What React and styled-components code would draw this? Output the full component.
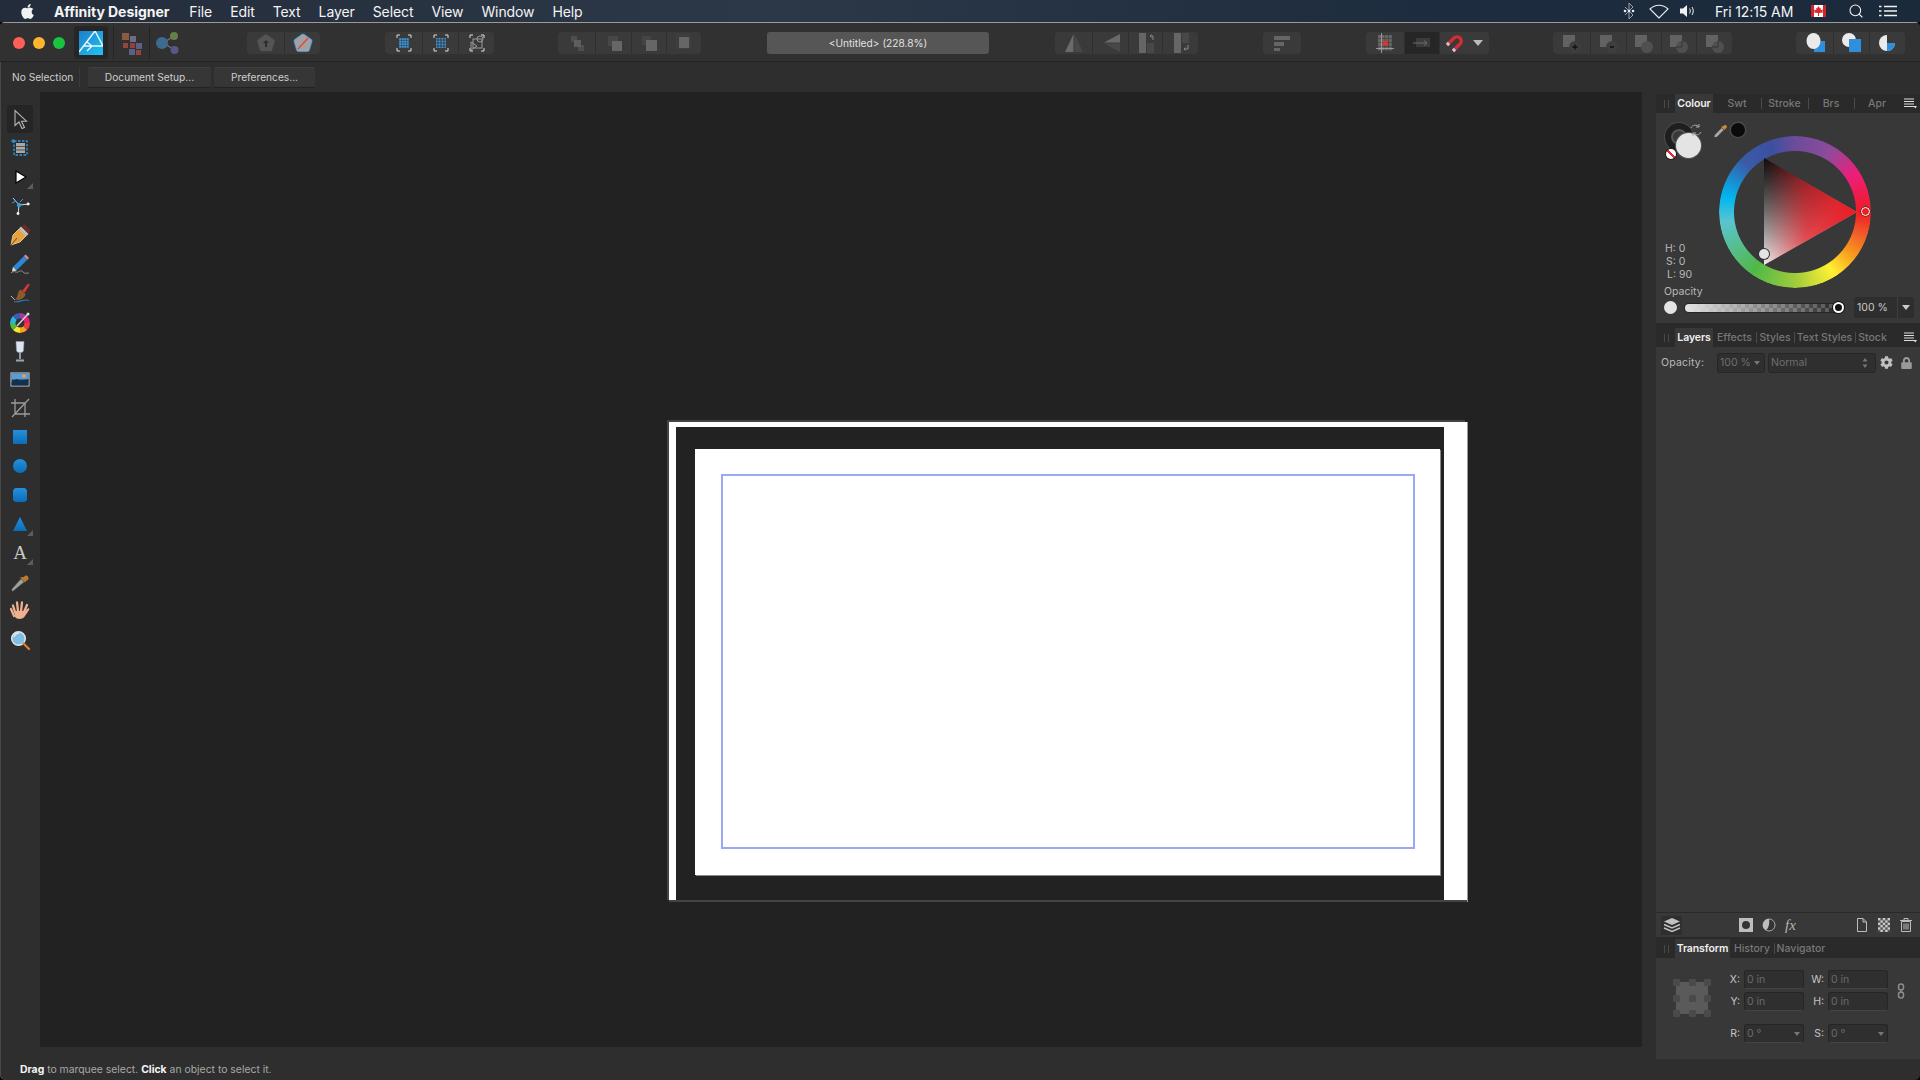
import styled, { createGlobalStyle } from "styled-components";
import { FaApple, FaCog, FaLock } from "react-icons/fa";
import { Search } from "lucide-react";

const menus = ["File", "Edit", "Text", "Layer", "Select", "View", "Window", "Help"];

// used inside the icon tables below, so they have to exist first
const Dropdown = styled.div`
	display: flex;
	align-items: center;
	gap: 7px;
	margin-left: -5px;
`;

const Caret = styled.span`
	width: 0;
	height: 0;
	flex: none;
	border-left: ${(p) => p.$size}px solid transparent;
	border-right: ${(p) => p.$size}px solid transparent;
	border-top: ${(p) => p.$size * 1.3}px solid ${(p) => p.$color};
`;

const ToolLetter = styled.span`
	font-family: "Liberation Serif", serif;
	font-size: 19px;
	color: #c9c9c9;
`;

const Brackets = () => (
	<path d="M5 7V4h3M16 4h3v3M19 17v3h-3M8 20H5v-3" fill="none" stroke="#ddd" strokeWidth="1" />
);

const Dots = ({ n, size, step, from }) => (
	<g fill="#3b9ae1">
		{Array.from({ length: n * n }).map((_, i) => (
			<rect key={i} x={from + (i % n) * step} y={from + Math.floor(i / n) * step} width={size} height={size} />
		))}
	</g>
);

const Svg = ({ children, size = 24 }) => (
	<svg width={size} height={size} viewBox="0 0 24 24">
		{children}
	</svg>
);

const petals = "12,5 19,10 16.500,18.500 7.500,18.500 5,10";

const toolbarGroups = {
	flowers: [
		{
			w: 37,
			icon: (
				<Svg>
					<polygon points={petals} fill="#555" stroke="#3e3e3e" strokeWidth="5.500" strokeLinejoin="round" />
					<polygon points={petals} fill="#555" stroke="#555" strokeWidth="3" strokeLinejoin="round" />
					<path d="M12 9l3 3h-2v4h-2v-4H9z" fill="#2c2c2c" />
				</Svg>
			),
		},
		{
			w: 36,
			icon: (
				<Svg>
					<polygon points={petals} fill="#a2a2a2" stroke="#2f8fdc" strokeWidth="5" strokeLinejoin="round" />
					<polygon points={petals} fill="#a2a2a2" stroke="#a2a2a2" strokeWidth="3.400" strokeLinejoin="round" />
					<path d="M7 18L17 7" stroke="#e8403a" strokeWidth="1.2" />
				</Svg>
			),
		},
	],
	select: [
		{
			w: 37,
			icon: (
				<Svg>
					<Brackets />
					<Dots n={4} size={2} step={2.5} from={7.2} />
				</Svg>
			),
		},
		{
			w: 36,
			icon: (
				<Svg>
					<Brackets />
					<Dots n={7} size={1} step={1.5} from={7} />
				</Svg>
			),
		},
		{
			w: 36,
			icon: (
				<Svg>
					<Brackets />
					<g fill="none" stroke="#999">
						<circle cx="15" cy="8" r="3" />
						<rect x="8" y="8" width="9" height="9" />
						<path d="M6 11l6 4-6 4z" />
					</g>
				</Svg>
			),
		},
	],
	arrange: [
		{
			w: 37,
			icon: (
				<Svg>
					<g fill="#4e4e4e">
						<rect x="6" y="5" width="6" height="6" />
						<rect x="13" y="14" width="6" height="6" />
					</g>
					<rect x="9" y="9" width="7" height="7" fill="#5e5e5e" />
				</Svg>
			),
		},
		{
			w: 36,
			icon: (
				<Svg>
					<rect x="6" y="5" width="10" height="10" fill="#474747" />
					<rect x="10" y="10" width="10" height="10" fill="#666" />
				</Svg>
			),
		},
		{
			w: 35,
			icon: (
				<Svg>
					<rect x="5" y="5" width="9" height="9" fill="#444" />
					<rect x="9" y="9" width="11" height="11" fill="#666" />
				</Svg>
			),
		},
		{
			w: 35,
			icon: (
				<Svg>
					<rect x="5" y="4" width="13" height="13" fill="none" stroke="#444" />
					<rect x="7" y="6" width="10" height="11" fill="#666" />
				</Svg>
			),
		},
	],
	flip: [
		{
			w: 37,
			icon: (
				<Svg>
					<path d="M11.5 3v18H3z" fill="#6a6a6a" />
					<path d="M12.5 3v18H21z" fill="#484848" />
				</Svg>
			),
		},
		{
			w: 36,
			icon: (
				<Svg>
					<path d="M21 3v8.5H5z" fill="#6a6a6a" />
					<path d="M21 21v-8.5H5z" fill="#484848" />
				</Svg>
			),
		},
		{
			w: 34,
			icon: (
				<Svg>
					<rect x="5" y="2" width="7" height="20" fill="#666" />
					<rect x="13" y="12" width="7" height="10" fill="#484848" />
					<path d="M19 9V5h-3m1.5-1.5L16 5l1.5 1.5" fill="none" stroke="#888" />
				</Svg>
			),
		},
		{
			w: 36,
			icon: (
				<Svg>
					<rect x="5" y="2" width="7" height="20" fill="#666" />
					<rect x="13" y="2" width="7" height="10" fill="#484848" />
					<path d="M19 14v4h-4m1.5-1.5L15 18l1.5 1.5" fill="none" stroke="#888" />
				</Svg>
			),
		},
	],
	align: [
		{
			w: 38,
			icon: (
				<Svg>
					<g fill="#666">
						<rect x="4" y="5" width="16" height="4" />
						<rect x="4" y="11" width="10" height="4" />
						<rect x="4" y="17" width="6" height="3" />
					</g>
				</Svg>
			),
		},
	],
	snapping: [
		{
			w: 38,
			icon: (
				<Svg>
					<g fill="#666">
						{Array.from({ length: 16 }).map((_, i) => (
							<rect key={i} x={5 + (i % 4) * 3.6} y={4 + Math.floor(i / 4) * 4} width="3" height="3.4" />
						))}
					</g>
					<rect x="10" y="10" width="4.5" height="4.5" fill="#ee2a2a" />
					<path d="M3 17.5h18M8.5 2v20" stroke="#aaa" strokeWidth="0.8" />
				</Svg>
			),
		},
		{
			w: 35,
			on: true,
			icon: (
				<Svg>
					<rect x="6" y="7" width="14" height="9" fill="#3c3c3c" />
					<path d="M3 12h14m-3-2.5l3 2.5-3 2.5" fill="none" stroke="#6c6c6c" />
				</Svg>
			),
		},
		{
			w: 50,
			icon: (
				<Dropdown>
					<Svg>
						<path d="M5 14L12 7A4.240 4.240 0 0 1 18 13L11 20" fill="none" stroke="#d92b34" strokeWidth="3.200" />
						<path d="M5 14l2-2M11 20l2-2" fill="none" stroke="#c9c9c9" strokeWidth="3.200" />
					</Svg>
					<Caret $color="#bbb" $size={5} />
				</Dropdown>
			),
		},
	],
	boolean: [
		{ w: 37, mark: "+" },
		{ w: 36, mark: "-" },
		{ w: 35 },
		{ w: 35, split: true },
		{ w: 36, split: true },
	].map((b) => ({
		w: b.w,
		icon: (
			<Svg>
				<rect x="3" y="4" width="12" height="12" fill="#626262" />
				<circle cx="15" cy="16" r="6" fill={b.mark ? "#3e3e3e" : "#505050"} />
				{b.mark === "+" && <path d="M12.500 16h5M15 13.500v5" stroke="#111" strokeWidth="1.3" />}
				{b.mark === "-" && <path d="M13 16h4" stroke="#111" strokeWidth="1.3" />}
				{b.split && <path d="M15 10v6H9" fill="none" stroke="#333" />}
			</Svg>
		),
	})),
	order: [
		{
			w: 37,
			icon: (
				<Svg>
					<rect x="11" y="10" width="11" height="11" fill="#2f8fdc" />
					<ellipse cx="10.500" cy="10" rx="7" ry="8" fill="#eaeaea" />
				</Svg>
			),
		},
		{
			w: 36,
			icon: (
				<Svg>
					<circle cx="9" cy="9" r="7" fill="#eaeaea" />
					<rect x="9" y="8" width="12" height="13" fill="#2f8fdc" />
				</Svg>
			),
		},
		{
			w: 36,
			icon: (
				<Svg>
					<circle cx="11" cy="12" r="8" fill="#eaeaea" />
					<rect x="11" y="4" width="9" height="8" fill="#3a3a3a" />
					<path d="M11 12h8c0 4-3 8-8 8z" fill="#2f8fdc" />
				</Svg>
			),
		},
	],
};

const wedges = ["#ef3b3b", "#f6a11e", "#f2e92f", "#4dba4a", "#27b5e8", "#3f5db0", "#a23d9c", "#e81e78"];

const polar = (deg, r) => {
	const a = (deg * Math.PI) / 180;
	return `${12 + r * Math.cos(a)} ${13 + r * Math.sin(a)}`;
};

const BlueFill = ({ id }) => (
	<defs>
		<linearGradient id={id} x1="0" y1="0" x2="0" y2="1">
			<stop offset="0" stopColor="#2590de" />
			<stop offset="1" stopColor="#0c6cb6" />
		</linearGradient>
	</defs>
);

const tools = [
	{
		active: true,
		icon: (
			<Svg>
				<path d="M7 3.500v15l4-3.500 3 6.500 2.500-1-3-6.300h5z" fill="#262626" stroke="#b5b5b5" strokeWidth="1.100" />
			</Svg>
		),
	},
	{
		icon: (
			<Svg>
				<rect x="6" y="5" width="13" height="14" fill="none" stroke="#2f9be6" strokeWidth="1.300" strokeDasharray="2.500 1.500" />
				<rect x="8" y="7" width="9" height="10" fill="#a8a8a8" />
				<path d="M8 10.500h9M8 14h9" stroke="#555" />
				<path d="M3 5h4M5 3v4" stroke="#2f9be6" />
			</Svg>
		),
	},
	{
		flyout: true,
		icon: (
			<Svg>
				<path d="M8 6l10 6-10 6z" fill="#fff" stroke="#000" strokeWidth="1.200" />
			</Svg>
		),
	},
	{
		icon: (
			<Svg>
				<path d="M5 4l6 7M11 11l11-1M11 11l-1 10" fill="none" stroke="#d2d2d2" strokeWidth="1" />
				<circle cx="11" cy="11" r="2.200" fill="#2f9be6" />
				<circle cx="20" cy="10" r="1.400" fill="#f2f2f2" />
				<circle cx="10" cy="19.500" r="1.400" fill="#f2f2f2" />
				<path d="M4 9l4-2M15 5l-3 3" stroke="#2f9be6" />
			</Svg>
		),
	},
	{
		icon: (
			<Svg>
				<path d="M3 22l2-10 6-6 7 7-6 6z" fill="#e5a23e" stroke="#f5d79a" strokeWidth="0.800" />
				<path d="M3 22l6-7" stroke="#7a4a14" />
				<path d="M11 5.500l2-2 7.500 7.500-2 2z" fill="#c4c4c4" />
				<path d="M14 3.500L16.500 1 23 7.500 20.500 10z" fill="#6b2a26" />
			</Svg>
		),
	},
	{
		icon: (
			<Svg>
				<path d="M5 15L16 4l3.500 3.500-11 11-4.500 1z" fill="#2c86d8" />
				<path d="M16 4l1.500-1.500 3.500 3.500L19.500 7.500z" fill="#e98a8a" />
				<path d="M5 15l3.500 3.500-4.500 1z" fill="#ecd4a8" />
				<path d="M3 21c3-3 5 0 7-1s3-2 5 0 4 1 6 1" fill="none" stroke="#9a9a9a" strokeWidth="0.900" />
			</Svg>
		),
	},
	{
		icon: (
			<Svg>
				<path d="M14 10L20 2.500l1.800 1.200-5 8z" fill="#d9343a" />
				<path d="M12.500 8.500l5 4.500c-1 5-6.500 7-10.500 5.500 3-1.500 2-7.500 5.500-10z" fill="#8d5a2b" />
				<path d="M6 20.500c5 1.500 10-3 15-1" fill="none" stroke="#2a7cc8" strokeWidth="1.100" />
				<path d="M3 15l4 4" stroke="#bbb" />
			</Svg>
		),
	},
	{
		icon: (
			<Svg>
				{wedges.map((c, i) => (
					<path
						key={c}
						d={`M12 13L${polar(i * 45, 10)}A10 10 0 0 1 ${polar((i + 1) * 45, 10)}Z`}
						fill={c}
					/>
				))}
				<circle cx="12" cy="13" r="4.500" fill="#333" />
				<path d="M9 16l11-12" stroke="#ddd" strokeWidth="1.300" />
				<circle cx="20" cy="4" r="1.500" fill="#ddd" />
			</Svg>
		),
	},
	{
		icon: (
			<Svg>
				<path d="M8 2.500h8l-.5 9c-.5 3-6.500 3-7 0z" fill="#dbe4ef" stroke="#8899b4" strokeWidth="0.500" />
				<path d="M12 14v6M8 21.500h8" stroke="#9aa5b4" strokeWidth="1.800" />
			</Svg>
		),
	},
	{
		icon: (
			<Svg>
				<rect x="3" y="6" width="18" height="13" fill="#1f3550" stroke="#cfcfcf" />
				<rect x="3.500" y="6.500" width="17" height="6" fill="#5b9bd6" />
				<circle cx="16" cy="9" r="1.800" fill="#f3a53c" />
				<path d="M3.500 15l5-3 5 2 7-2v6.500h-17z" fill="#14304f" />
			</Svg>
		),
	},
	{
		icon: (
			<Svg>
				<path d="M7 3v15h15M3 7h14v14M4 21L21 3" fill="none" stroke="#9b9b9b" strokeWidth="1.300" />
			</Svg>
		),
	},
	{
		icon: (
			<Svg>
				<BlueFill id="toolRect" />
				<rect x="5" y="5" width="14" height="14" fill="url(#toolRect)" />
			</Svg>
		),
	},
	{
		icon: (
			<Svg>
				<BlueFill id="toolCircle" />
				<circle cx="12" cy="12" r="7" fill="url(#toolCircle)" />
			</Svg>
		),
	},
	{
		icon: (
			<Svg>
				<BlueFill id="toolRounded" />
				<rect x="5" y="5" width="14" height="14" rx="3.500" fill="url(#toolRounded)" />
			</Svg>
		),
	},
	{
		flyout: true,
		icon: (
			<Svg>
				<BlueFill id="toolTriangle" />
				<path d="M12 5l7 14H5z" fill="url(#toolTriangle)" />
			</Svg>
		),
	},
	{ flyout: true, icon: <ToolLetter>A</ToolLetter> },
	{
		icon: (
			<Svg>
				<path d="M5 21l-1 0 0-2 9-10 3 3z" fill="#a0a0a0" stroke="#6a6a6a" strokeWidth="0.500" />
				<path d="M12 7.500l5 5 1.500-2 1.500-.5c1.500-2 0-4.500-2-4.500-1.500 0-1 1-2.500 1.500z" fill="#b87a2e" />
			</Svg>
		),
	},
	{
		icon: (
			<Svg>
				<path
					d="M7 13L5 6.500M10 12L9 3.500M13 12l1-8.500M16 13l3-7"
					fill="none"
					stroke="#eeb08e"
					strokeWidth="2.300"
					strokeLinecap="round"
				/>
				<path d="M6 12h10.500l4-3c1 .5 1 1.500.5 2l-4 6c-1.500 3.500-8 4-10 1z" fill="#eeb08e" />
				<path d="M3 10l3 7" stroke="#eeb08e" strokeWidth="2.200" strokeLinecap="round" />
			</Svg>
		),
	},
	{
		icon: (
			<Svg>
				<circle cx="10.500" cy="10.500" r="6.800" fill="#7fbfe6" stroke="#e3e3e3" strokeWidth="1.500" />
				<path d="M6 9c1-3 3-4 5-4" stroke="#d7eefa" strokeWidth="1.300" fill="none" />
				<path d="M15.500 15.500L21 21" stroke="#d9822b" strokeWidth="2.300" strokeLinecap="round" />
			</Svg>
		),
	},
];

const transformHandles = Array.from({ length: 9 });

function PanelTabs({ tabs, menu }) {
	return (
		<TabBar>
			<Grip />
			{tabs.map((t, i) => (
				<Tab key={t.label} $w={t.w} $active={i === 0} $sep={i > 1}>
					{t.label}
				</Tab>
			))}
			{menu && <PanelMenu />}
		</TabBar>
	);
}

function ToolbarGroup({ name, ml }) {
	return (
		<Group $ml={ml}>
			{toolbarGroups[name].map((b, i) => (
				<GroupButton key={i} $w={b.w} $on={b.on}>
					{b.icon}
				</GroupButton>
			))}
		</Group>
	);
}

function PanelMenu() {
	return (
		<MenuLines>
			<svg width="13" height="11" viewBox="0 0 13 11">
				<path d="M0 1h10M0 3.500h10M0 6h10M0 8.500h10" stroke="#ddd" />
				<path d="M9.500 8h3.500l-1.750 2.500z" fill="#ddd" />
			</svg>
		</MenuLines>
	);
}

function ColourPanel() {
	return (
		<ColourBody>
			<ColourGrid>
				<ColourTools>
					<Swatches>
						<BackSwatch />
						<FrontSwatch />
						<NoneSwatch />
						<SwapArrows width="14" height="14" viewBox="0 0 14 14">
							<path
								d="M2 5c1-3 6-4 8-1M12 9c-1 3-6 4-8 1M10 1v3H7M4 13v-3h3"
								fill="none"
								stroke="#aaa"
								strokeWidth="1"
							/>
						</SwapArrows>
					</Swatches>
					<Dropper width="16" height="16" viewBox="0 0 24 24">
						<path d="M3 23l-1-1 1-3 10-10 3 3-10 10z" fill="#a8a8a8" />
						<path d="M12 7l5 5 1.500-2 1.500-.5c2-2.500 0-6-2.500-5-1.500.5-1 1.500-2.500 2z" fill="#c98a35" />
					</Dropper>
					<BlackDot />
				</ColourTools>
				<Hsl>
					<HslLine $indent={0}>H: 0</HslLine>
					<HslLine $indent={1}>S: 0</HslLine>
					<HslLine $indent={2}>L: 90</HslLine>
				</Hsl>
				<Wheel>
					<Ring />
					<WheelTriangle width="152" height="152" viewBox="0 0 152 152">
						<defs>
							<linearGradient id="triLight" x1="0" y1="0" x2="0" y2="1">
								<stop offset="0" stopColor="#111" />
								<stop offset="1" stopColor="#fff" />
							</linearGradient>
							<linearGradient id="triHue" x1="0" y1="0" x2="1" y2="0">
								<stop offset="0" stopColor="#ee1c25" stopOpacity="0" />
								<stop offset="0.45" stopColor="#ee1c25" stopOpacity="0.72" />
								<stop offset="1" stopColor="#ee1c25" />
							</linearGradient>
							<linearGradient id="triShade" x1="0.1" y1="0" x2="0.9" y2="0.8">
								<stop offset="0" stopColor="#000" stopOpacity="0.3" />
								<stop offset="0.7" stopColor="#000" stopOpacity="0" />
							</linearGradient>
						</defs>
						<polygon points="45,22 138,76 45,129" fill="url(#triLight)" />
						<polygon points="45,22 138,76 45,129" fill="url(#triHue)" />
						<polygon points="45,22 138,76 45,129" fill="url(#triShade)" />
					</WheelTriangle>
					<HueHandle />
					<ToneHandle />
				</Wheel>
			</ColourGrid>
			<OpacityLabel>Opacity</OpacityLabel>
			<OpacityRow>
				<OpacityDot />
				<OpacityTrack>
					<OpacityKnob />
				</OpacityTrack>
				<PercentField>
					<span>100 %</span>
					<PercentCaret>
						<Caret $color="#ccc" $size={4} />
					</PercentCaret>
				</PercentField>
			</OpacityRow>
		</ColourBody>
	);
}

function LayersPanel() {
	return (
		<>
			<PanelTabs
				tabs={[
					{ label: "Layers", w: 38 },
					{ label: "Effects", w: 43 },
					{ label: "Styles", w: 38 },
					{ label: "Text Styles", w: 61 },
					{ label: "Stock", w: 35 },
				]}
				menu
			/>
			<LayersOptions>
				<OptionLabel>Opacity:</OptionLabel>
				<DimField $w={48} $h={20}>
					<span>100 %</span>
					<Caret $color="#777" $size={3.5} />
				</DimField>
				<DimField $w={108} $h={20} $ml={3}>
					<span>Normal</span>
					<StepCaret>
						<svg width="6" height="12" viewBox="0 0 6 12">
							<path d="M3 1l2.500 3.500h-5zM3 11L.5 7.500h5z" fill="#777" />
						</svg>
					</StepCaret>
				</DimField>
				<GearIcon />
				<LockIcon />
			</LayersOptions>
			<LayersList />
			<LayerActions>
				<LayerStackButton>
					<svg width="18" height="16" viewBox="0 0 18 16">
						<path d="M9 1l8 3.500L9 8 1 4.500z" fill="#c2c2c2" />
						<path d="M1 7.500L9 11l8-3.500M1 11l8 3.500 8-3.500" fill="none" stroke="#c2c2c2" strokeWidth="1.400" />
					</svg>
				</LayerStackButton>
				<ActionIcons>
					<svg width="14" height="14" viewBox="0 0 14 14">
						<rect width="14" height="14" fill="#bdbdbd" />
						<circle cx="7" cy="7" r="4" fill="#333" />
					</svg>
					<svg width="14" height="14" viewBox="0 0 14 14">
						<circle cx="7" cy="7" r="6" fill="#333" stroke="#aaa" />
						<path d="M7 1a6 6 0 0 0-3 11.200C6 11 8 6 7 1z" fill="#bdbdbd" />
					</svg>
					<FxMark>fx</FxMark>
				</ActionIcons>
				<ActionIcons $end>
					<svg width="12" height="14" viewBox="0 0 12 14">
						<path d="M1.500.5h5.500l3.500 3.500v9.500h-9zM7 .5V4h3.500" fill="none" stroke="#bdbdbd" />
					</svg>
					<svg width="12" height="14" viewBox="0 0 12 14">
						<rect width="12" height="14" fill="#555" />
						<g fill="#c9c9c9">
							{Array.from({ length: 30 }).map((_, i) =>
								(i % 5) % 2 === Math.floor(i / 5) % 2 ? (
									<rect
										key={i}
										x={(i % 5) * 2.4}
										y={Math.floor(i / 5) * 2.34}
										width="2.400"
										height="2.340"
									/>
								) : null
							)}
						</g>
					</svg>
					<svg width="12" height="14" viewBox="0 0 12 14">
						<path d="M0 2.500h12M4 2.500V.5h4v2" fill="none" stroke="#bdbdbd" />
						<path d="M1.500 3.500h9v10h-9z" fill="none" stroke="#bdbdbd" />
						<path d="M4 5.500v6M6 5.500v6M8 5.500v6" stroke="#bdbdbd" />
					</svg>
				</ActionIcons>
			</LayerActions>
		</>
	);
}

function TransformPanel() {
	return (
		<>
			<PanelTabs
				tabs={[
					{ label: "Transform", w: 55 },
					{ label: "History", w: 44 },
					{ label: "Navigator", w: 54 },
				]}
			/>
			<TransformBody>
				<AnchorBox>
					{transformHandles.map((_, i) => (
						<AnchorDot key={i} />
					))}
				</AnchorBox>
				<TransformFields>
					<FieldLabel>X:</FieldLabel>
					<TransformField>0 in</TransformField>
					<FieldLabel>W:</FieldLabel>
					<TransformField>0 in</TransformField>
					<ChainIcon width="8" height="16" viewBox="0 0 8 16">
						<g fill="none" stroke="#8a8a8a" strokeWidth="1.500">
							<rect x="1.500" y="1" width="5" height="6" rx="2.500" />
							<rect x="1.500" y="9" width="5" height="6" rx="2.500" />
							<path d="M4 6v4" />
						</g>
					</ChainIcon>
					<FieldLabel>Y:</FieldLabel>
					<TransformField>0 in</TransformField>
					<FieldLabel>H:</FieldLabel>
					<TransformField>0 in</TransformField>
					<FieldLabel>R:</FieldLabel>
					<TransformField>
						<span>0 °</span>
						<Caret $color="#777" $size={3.5} />
					</TransformField>
					<FieldLabel>S:</FieldLabel>
					<TransformField>
						<span>0 °</span>
						<Caret $color="#777" $size={3.5} />
					</TransformField>
				</TransformFields>
			</TransformBody>
		</>
	);
}

export default function App() {
	return (
		<>
			<GlobalStyle />
			<Screen>
				<MenuBar>
					<AppleLogo />
					<AppName>Affinity Designer</AppName>
					{menus.map((m) => (
						<MenuItem key={m}>{m}</MenuItem>
					))}
					<Status>
						<svg width="12" height="18" viewBox="0 0 12 18">
							<path d="M2 5l8 8-4 4V1l4 4-8 8" fill="none" stroke="#9aa3ad" strokeWidth="1" />
							<circle cx="2" cy="9" r="1.300" fill="#eee" />
							<circle cx="6" cy="9" r="1.300" fill="#eee" />
							<circle cx="10" cy="9" r="1.300" fill="#eee" />
						</svg>
						<WifiIcon width="20" height="15" viewBox="0 0 20 15">
							<path d="M10 14L1 5c5-5 13-5 18 0z" fill="none" stroke="#eee" strokeWidth="1.100" />
						</WifiIcon>
						<VolumeIcon width="16" height="14" viewBox="0 0 16 14">
							<path d="M0 4.500h3L7 1v12L3 9.500H0z" fill="#f2f2f2" />
							<path d="M9.500 4.500c1 1.500 1 3.500 0 5M12 3c1.700 2.500 1.700 5.500 0 8" fill="none" stroke="#eee" />
						</VolumeIcon>
						<Clock>Fri 12:15 AM</Clock>
						<Flag>
							<svg width="9" height="10" viewBox="0 0 9 10">
								<path d="M4.500 0L6 2.500l1-.5-.3 2.200L9 3.500l-.5 2L9 6.500 5 7v3H4V7L0 6.500l.5-1L0 3.500l2.300.7L2 2l1 .5z" fill="#e0242c" />
							</svg>
						</Flag>
						<SearchGlyph size={16} strokeWidth={1.6} />
						<ListIcon width="18" height="12" viewBox="0 0 18 12">
							<path d="M5 1.500h13M5 6h13M5 10.500h13" stroke="#f2f2f2" strokeWidth="1.500" />
							<path d="M0 1.500h2.500M0 6h2.500M0 10.500h2.500" stroke="#f2f2f2" strokeWidth="1.500" />
						</ListIcon>
					</Status>
				</MenuBar>
				<Window>
					<Toolbar>
						<Light $c="#ff5f57" $ml={13} />
						<Light $c="#ffb52e" $ml={8} />
						<Light $c="#19c43f" $ml={8} />
						<AppButton>
							<svg width="24" height="24" viewBox="0 0 24 24">
								<defs>
									<linearGradient id="afLogo" x1="0" y1="0" x2="1" y2="1">
										<stop offset="0" stopColor="#1c7fc9" />
										<stop offset="1" stopColor="#20c4f4" />
									</linearGradient>
								</defs>
								<rect width="24" height="24" fill="url(#afLogo)" />
								<path
									d="M0 21L16 0M16 0l8 15M5 15h19M8 11l5 4-5 5"
									fill="none"
									stroke="#eaf8ff"
									strokeWidth="1.400"
								/>
							</svg>
						</AppButton>
						<BarDivider />
						<PlainIcon $ml={6}>
							<Svg>
								<rect x="2" y="2" width="7" height="7" fill="#8b5a44" />
								<rect x="10" y="5" width="6" height="6" fill="#6a6c8c" />
								<rect x="3" y="12" width="5" height="5" fill="#94463e" />
								<rect x="10" y="12" width="5" height="5" fill="#93403a" />
								<rect x="16" y="12" width="6" height="6" fill="#5d6084" />
								<rect x="9" y="18" width="6" height="6" fill="#5d6084" />
								<rect x="16" y="19" width="5" height="5" fill="#94463e" />
							</Svg>
						</PlainIcon>
						<BarDivider $ml={5} />
						<PlainIcon $ml={5}>
							<Svg>
								<path d="M8 12L19 5M8 12l12 7" stroke="#777" strokeWidth="1.300" />
								<circle cx="7" cy="12" r="6" fill="#3b6c90" />
								<circle cx="19" cy="5" r="4" fill="#657f48" />
								<circle cx="19.500" cy="19" r="4" fill="#5a5687" />
							</Svg>
						</PlainIcon>
						<ToolbarGroup name="flowers" ml={68} />
						<ToolbarGroup name="select" ml={65} />
						<ToolbarGroup name="arrange" ml={64} />
						<DocTitle>&lt;Untitled&gt; (228.8%)</DocTitle>
						<ToolbarGroup name="flip" ml={66} />
						<ToolbarGroup name="align" ml={65} />
						<ToolbarGroup name="snapping" ml={65} />
						<ToolbarGroup name="boolean" ml={64} />
						<ToolbarGroup name="order" ml={64} />
					</Toolbar>
					<ContextBar>
						<ContextLabel>No Selection</ContextLabel>
						<ContextButton $w={123}>Document Setup...</ContextButton>
						<ContextButton $w={101}>Preferences...</ContextButton>
					</ContextBar>
					<Workspace>
						<LeftArea>
							<ToolsAndCanvas>
								<ToolColumn>
									{tools.map((t, i) => (
										<Tool key={i} $active={t.active}>
											{t.icon}
											{t.flyout && <Flyout />}
										</Tool>
									))}
								</ToolColumn>
								<Canvas>
									<Page>
										<PageBlack>
											<PageWhite>
												<Selection />
											</PageWhite>
										</PageBlack>
									</Page>
								</Canvas>
							</ToolsAndCanvas>
							<StatusBar>
								<b>Drag</b> to marquee select. <b>Click</b> an object to select it.
							</StatusBar>
						</LeftArea>
						<Panels>
							<PanelTabs
								tabs={[
									{ label: "Colour", w: 38 },
									{ label: "Swt", w: 48 },
									{ label: "Stroke", w: 47 },
									{ label: "Brs", w: 46 },
									{ label: "Apr", w: 46 },
								]}
								menu
							/>
							<ColourPanel />
							<LayersPanel />
							<TransformPanel />
						</Panels>
					</Workspace>
				</Window>
			</Screen>
		</>
	);
}

const GlobalStyle = createGlobalStyle`
	html, body {
		margin: 0;
		height: 100%;
		background: #2e2e2e;
		overflow: hidden;
	}
	* {
		box-sizing: border-box;
	}
`;

const Screen = styled.div`
	width: 1920px;
	height: 1080px;
	display: flex;
	flex-direction: column;
	font-family: "Inter", "Liberation Sans", sans-serif;
	background: #000;
`;

const MenuBar = styled.div`
	height: 22px;
	display: flex;
	align-items: center;
	color: #f4f4f4;
	font-size: 14px;
	background: linear-gradient(90deg, #232c3a, #2c3848 40%, #1d2c3e 75%, #1a2a3b);
`;

const AppleLogo = styled(FaApple)`
	width: 17px;
	height: 17px;
	margin-left: 19px;
	color: #f2f2f2;
`;

const AppName = styled.span`
	margin-left: 18px;
	font-weight: 700;
	margin-right: 2px;
	letter-spacing: -0.05px;
`;

const MenuItem = styled.span`
	margin-left: 18px;
	letter-spacing: -0.1px;
`;

const Status = styled.div`
	margin-left: auto;
	display: flex;
	align-items: center;
`;

const WifiIcon = styled.svg`
	margin-left: 14px;
`;

const VolumeIcon = styled.svg`
	margin-left: 11px;
`;

const Clock = styled.span`
	margin-left: 19px;
	width: 78px;
	white-space: nowrap;
	letter-spacing: -0.1px;
`;

const Flag = styled.span`
	margin-left: 18px;
	width: 15px;
	height: 12px;
	background: #fff;
	border-left: 3px solid #d4232b;
	border-right: 3px solid #d4232b;
	display: flex;
	align-items: center;
	justify-content: center;
	svg {
		flex: none;
	}
`;

const SearchGlyph = styled(Search)`
	margin-left: 22px;
	color: #f2f2f2;
`;

const ListIcon = styled.svg`
	margin-left: 15px;
	margin-right: 23px;
`;

const Window = styled.div`
	flex: 1;
	display: flex;
	flex-direction: column;
	background: #2e2e2e;
	border-radius: 5px 5px 5px 5px;
	overflow: hidden;
	box-shadow: inset 1px 0 0 #484848;
`;

const Toolbar = styled.div`
	height: 40px;
	display: flex;
	align-items: center;
	padding-top: 1px;
	border-top: 1px solid #9a9a9a;
	border-bottom: 1px solid #232323;
	background: #313131;
	color: #ddd;
`;

const Light = styled.span`
	width: 12px;
	height: 12px;
	flex: none;
	border-radius: 50%;
	margin-left: ${(p) => p.$ml}px;
	background: ${(p) => p.$c};
`;

const AppButton = styled.div`
	width: 34px;
	height: 33px;
	margin-left: 9px;
	display: flex;
	align-items: center;
	justify-content: center;
	background: #262626;
	border-radius: 3px;
`;

const BarDivider = styled.span`
	width: 1px;
	height: 33px;
	margin-left: ${(p) => p.$ml ?? 5}px;
	background: #242424;
`;

const PlainIcon = styled.div`
	width: 24px;
	height: 24px;
	margin-left: ${(p) => p.$ml}px;
`;

const Group = styled.div`
	display: flex;
	height: 22px;
	margin-left: ${(p) => p.$ml}px;
	background: #3a3a3a;
	border-radius: 4px;
	overflow: hidden;
`;

const GroupButton = styled.div`
	width: ${(p) => p.$w}px;
	display: flex;
	align-items: center;
	justify-content: center;
	background: ${(p) => (p.$on ? "#262626" : "transparent")};
	& + & {
		border-left: 1px solid #2f2f2f;
	}
	svg {
		flex: none;
	}
`;

const DocTitle = styled.div`
	width: 222px;
	height: 22px;
	margin-left: 66px;
	padding-top: 1px;
	display: flex;
	align-items: center;
	justify-content: center;
	background: #565656;
	border-radius: 3px;
	color: #e2e2e2;
	font-size: 10.2px;
`;

const ContextBar = styled.div`
	height: 30px;
	display: flex;
	align-items: center;
	padding-left: 12px;
	font-size: 10.2px;
	color: #cfcfcf;
`;

const ContextLabel = styled.span`
	width: 68px;
	height: 20px;
	line-height: 20px;
	white-space: nowrap;
	margin-right: 8px;
	border-right: 1px solid #3a3a3a;
`;

const ContextButton = styled.div`
	width: ${(p) => p.$w}px;
	height: 21px;
	margin-right: 3px;
	display: flex;
	align-items: center;
	justify-content: center;
	background: #363636;
	border-radius: 2px;
	border-top: 1px solid #3f3f3f;
	border-bottom: 1px solid #222;
`;

const Workspace = styled.div`
	flex: 1;
	display: flex;
	min-height: 0;
`;

const LeftArea = styled.div`
	width: 1656px;
	display: flex;
	flex-direction: column;
`;

const ToolsAndCanvas = styled.div`
	height: 955px;
	display: flex;
`;

const ToolColumn = styled.div`
	width: 40px;
	padding-top: 13px;
	display: flex;
	flex-direction: column;
	align-items: center;
	gap: 0.94px;
`;

const Tool = styled.div`
	position: relative;
	width: 26px;
	height: 28px;
	flex: none;
	display: flex;
	align-items: center;
	justify-content: center;
	border-radius: 3px;
	background: ${(p) => (p.$active ? "#252525" : "transparent")};
`;

const Flyout = styled.span`
	position: absolute;
	right: 0;
	bottom: 2px;
	width: 0;
	height: 0;
	border-left: 6px solid transparent;
	border-bottom: 6px solid #5c5c5c;
`;

const Canvas = styled.div`
	width: 1602px;
	padding: 330px 0 0 629px;
	background: #222;
	display: flex;
	align-items: flex-start;
`;

const Page = styled.div`
	width: 798px;
	height: 480px;
	padding: 5px 23px 0 7px;
	display: flex;
	background: #fff;
	box-shadow: -2px -2px 0 #444, 1px 0 0 #999;
	border-bottom: 2px solid #444;
`;

const PageBlack = styled.div`
	flex: 1;
	padding: 22px 4px 25px 19px;
	display: flex;
	background: #222;
`;

const PageWhite = styled.div`
	flex: 1;
	padding: 25px 25px 26px 26px;
	display: flex;
	background: #fff;
	box-shadow: 1px 1px 0 #888;
`;

const Selection = styled.div`
	flex: 1;
	border: 2px solid #9aa9f6;
`;

const StatusBar = styled.div`
	padding: 16px 0 0 20px;
	font-size: 10.4px;
	color: #a8a8a8;
	b {
		color: #f4f4f4;
	}
`;

const Panels = styled.div`
	width: 264px;
	padding: 2px 0 21px;
	display: flex;
	flex-direction: column;
	font-size: 10.5px;
`;

const TabBar = styled.div`
	height: 19px;
	flex: none;
	display: flex;
	align-items: stretch;
	background: #2a2a2a;
`;

const Grip = styled.span`
	width: 19px;
	flex: none;
	position: relative;
	&::before {
		content: "";
		position: absolute;
		left: 8px;
		top: 6px;
		width: 3px;
		height: 8px;
		border-left: 1px solid #484848;
		border-right: 1px solid #484848;
	}
`;

const Tab = styled.div`
	position: relative;
	width: ${(p) => p.$w}px;
	display: flex;
	align-items: center;
	justify-content: center;
	white-space: nowrap;
	font-weight: ${(p) => (p.$active ? 600 : 500)};
	letter-spacing: ${(p) => (p.$active ? "-0.1px" : "0")};
	color: ${(p) => (p.$active ? "#f0f0f0" : "#777")};
	background: ${(p) => (p.$active ? "#383838" : "transparent")};
	&::before {
		content: "";
		display: ${(p) => (p.$sep ? "block" : "none")};
		position: absolute;
		left: 0;
		top: 4px;
		height: 11px;
		width: 1px;
		background: #4a4a4a;
	}
`;

const MenuLines = styled.div`
	margin-left: auto;
	margin-right: 3px;
	display: flex;
	align-items: center;
`;

const ColourBody = styled.div`
	height: 210px;
	flex: none;
	background: #383838;
	margin-bottom: 5px;
	padding-left: 8px;
	box-shadow: 0 5px 0 #2a2a2a;
	color: #b8b8b8;
`;

const ColourGrid = styled.div`
	display: grid;
	grid-template-columns: 55px 152px;
	grid-template-rows: 152px;
	padding-top: 23px;
`;

const ColourTools = styled.div`
	grid-column: 1 / 3;
	grid-row: 1;
	z-index: 1;
	margin-top: -19px;
	align-self: start;
	display: flex;
	align-items: flex-start;
	padding-top: 6px;
`;

const Swatches = styled.div`
	position: relative;
	width: 44px;
	height: 36px;
`;

const BackSwatch = styled.span`
	position: absolute;
	left: 1px;
	top: 0;
	width: 28px;
	height: 28px;
	border-radius: 50%;
	border: 6px solid #1e1e1e;
	box-shadow: inset 0 0 0 2px #555, 0 0 0 1px #4a4a4a;
	background: #383838;
`;

const FrontSwatch = styled.span`
	position: absolute;
	left: 12px;
	top: 10px;
	width: 25px;
	height: 25px;
	border-radius: 50%;
	background: #e4e4e4;
	box-shadow: 0 0 0 1px #555;
`;

const NoneSwatch = styled.span`
	position: absolute;
	left: 2px;
	top: 26px;
	width: 10px;
	height: 10px;
	border-radius: 50%;
	background: linear-gradient(135deg, #fff 42%, #e8252c 42%, #e8252c 58%, #fff 58%);
	box-shadow: 0 0 0 1px #1c1c1c;
	transform: scaleX(-1);
`;

const SwapArrows = styled.svg`
	position: absolute;
	left: 25px;
	top: 0;
`;

const Dropper = styled.svg`
	margin-left: 5px;
	margin-top: -1px;
`;

const BlackDot = styled.span`
	width: 14px;
	height: 14px;
	margin-left: 2px;
	border-radius: 50%;
	background: #0c0a0a;
	box-shadow: 0 0 0 1.500px #4a4a4a;
`;

const Hsl = styled.div`
	grid-column: 1;
	grid-row: 1;
	align-self: end;
	margin-bottom: 7px;
	line-height: 13px;
`;

const HslLine = styled.div`
	padding-left: ${(p) => 1 + p.$indent}px;
`;

const Wheel = styled.div`
	grid-column: 2;
	grid-row: 1;
	position: relative;
	width: 152px;
	height: 152px;
`;

const Ring = styled.div`
	position: absolute;
	inset: 0;
	border-radius: 50%;
	background: conic-gradient(
		#6b4c9a 0deg,
		#8f4a9c 30deg,
		#ed1e79 58deg,
		#ee1c25 90deg,
		#f15a29 108deg,
		#f7941d 125deg,
		#fff133 148deg,
		#9ecb3c 180deg,
		#50b848 215deg,
		#5bc4cf 262deg,
		#00b7f1 282deg,
		#3a5ba8 314deg,
		#3c4fa0 340deg,
		#6b4c9a 360deg
	);
	mask: radial-gradient(circle, transparent 60.5px, #000 61.5px);
`;

const WheelTriangle = styled.svg`
	position: absolute;
	left: 0;
	top: 0;
`;

const HueHandle = styled.span`
	position: absolute;
	left: 142px;
	top: 71px;
	width: 9px;
	height: 9px;
	border-radius: 50%;
	background: #ee1c25;
	border: 1.500px solid #fff;
	box-shadow: 0 0 0 0.500px #222;
`;

const ToneHandle = styled.span`
	position: absolute;
	left: 40px;
	top: 113px;
	width: 10px;
	height: 10px;
	border-radius: 50%;
	background: #e4e4e4;
	box-shadow: 0 0 0 1px #333;
`;

const OpacityLabel = styled.div`
	margin-top: -3px;
	line-height: 13px;
`;

const OpacityRow = styled.div`
	display: flex;
	align-items: center;
	margin-top: -1px;
	height: 21px;
`;

const OpacityDot = styled.span`
	width: 13px;
	height: 13px;
	border-radius: 50%;
	background: #e4e4e4;
`;

const OpacityTrack = styled.div`
	position: relative;
	width: 158px;
	height: 8px;
	margin-left: 8px;
	border-radius: 4px;
	background: linear-gradient(90deg, #e4e4e4, rgba(228, 228, 228, 0) 95%),
		repeating-conic-gradient(#2b2b2b 0 25%, #555 0 50%) 0 0 / 8px 8px;
	box-shadow: 0 0 0 1px #252525;
`;

const OpacityKnob = styled.span`
	position: absolute;
	right: -1px;
	top: -1.500px;
	width: 11px;
	height: 11px;
	border-radius: 50%;
	background: #111;
	border: 2px solid #fff;
	box-shadow: 0 0 0 1px #111;
`;

const PercentField = styled.div`
	width: 60px;
	height: 21px;
	margin-left: 11px;
	display: flex;
	align-items: center;
	justify-content: space-between;
	padding-left: 3px;
	color: #c8c8c8;
	background: #2e2e2e;
	border-radius: 2px;
`;

const PercentCaret = styled.span`
	width: 17px;
	height: 21px;
	display: flex;
	align-items: center;
	justify-content: center;
	border-left: 1px solid #3f3f3f;
`;

const LayersOptions = styled.div`
	height: 29px;
	flex: none;
	display: flex;
	align-items: center;
	padding: 2px 0 0 5px;
	background: #383838;
`;

const OptionLabel = styled.span`
	width: 56px;
	color: #b8b8b8;
	letter-spacing: 0.2px;
`;

const DimField = styled.div`
	width: ${(p) => p.$w}px;
	height: ${(p) => p.$h}px;
	margin-left: ${(p) => p.$ml ?? 0}px;
	flex: none;
	display: flex;
	align-items: center;
	justify-content: space-between;
	padding: 0 4px 0 2px;
	color: #6e6e6e;
	background: #2f2f2f;
	border: 1px solid #262626;
	border-radius: 3px;
`;

const StepCaret = styled.span`
	display: flex;
	margin-right: 3px;
`;

const GearIcon = styled(FaCog)`
	width: 13px;
	height: 13px;
	margin-left: 4px;
	color: #c0c0c0;
`;

const LockIcon = styled(FaLock)`
	width: 11px;
	height: 12px;
	margin-left: 8px;
	color: #9a9a9a;
`;

const LayersList = styled.div`
	flex: 1;
	background: #383838;
	border-bottom: 1px solid #2a2a2a;
`;

const LayerActions = styled.div`
	height: 24px;
	flex: none;
	display: flex;
	align-items: center;
	padding-left: 5px;
	margin-bottom: 2px;
	background: #383838;
	box-shadow: 0 2px 0 #2a2a2a;
`;

const LayerStackButton = styled.div`
	width: 21px;
	height: 19px;
	display: flex;
	align-items: center;
	justify-content: center;
	background: #2f2f2f;
`;

const ActionIcons = styled.div`
	display: flex;
	align-items: center;
	gap: ${(p) => (p.$end ? "10px" : "9px")};
	margin-left: ${(p) => (p.$end ? "auto" : "57px")};
	margin-right: ${(p) => (p.$end ? "8px" : "0")};
`;

const FxMark = styled.span`
	font-family: "Liberation Serif", serif;
	font-style: italic;
	font-size: 15px;
	color: #b5b5b5;
`;

const TransformBody = styled.div`
	height: 101px;
	flex: none;
	display: flex;
	padding: 12px 0 0 17px;
	background: #383838;
	color: #c4c4c4;
`;

const AnchorBox = styled.div`
	width: 38px;
	height: 38px;
	margin-top: 9px;
	padding: 0;
	display: grid;
	grid-template-columns: repeat(3, 7px);
	grid-template-rows: repeat(3, 7px);
	justify-content: space-between;
	align-content: space-between;
	background: #5a5a5a content-box;
	box-shadow: inset 0 0 0 3px #383838;
`;

const AnchorDot = styled.span`
	background: #4a4a4a;
	border-radius: 1px;
`;

const TransformFields = styled.div`
	display: grid;
	grid-template-columns: 26px 60px 24px 60px 20px;
	grid-template-rows: 19px 19px 29px;
	row-gap: 3px;
	align-items: end;
	margin-left: 7px;
	height: 73px;
`;

const FieldLabel = styled.span`
	text-align: right;
	padding-right: 4px;
	line-height: 19px;
`;

const TransformField = styled.div`
	height: 19px;
	display: flex;
	align-items: center;
	justify-content: space-between;
	padding: 0 3px 0 2px;
	color: #6a6a6a;
	background: #2f2f2f;
	border: 1px solid #262626;
	border-bottom-color: #444;
	border-radius: 3px;
`;

const ChainIcon = styled.svg`
	grid-row: 1 / 3;
	grid-column: 5;
	justify-self: end;
	align-self: center;
	margin-right: 3px;
`;
